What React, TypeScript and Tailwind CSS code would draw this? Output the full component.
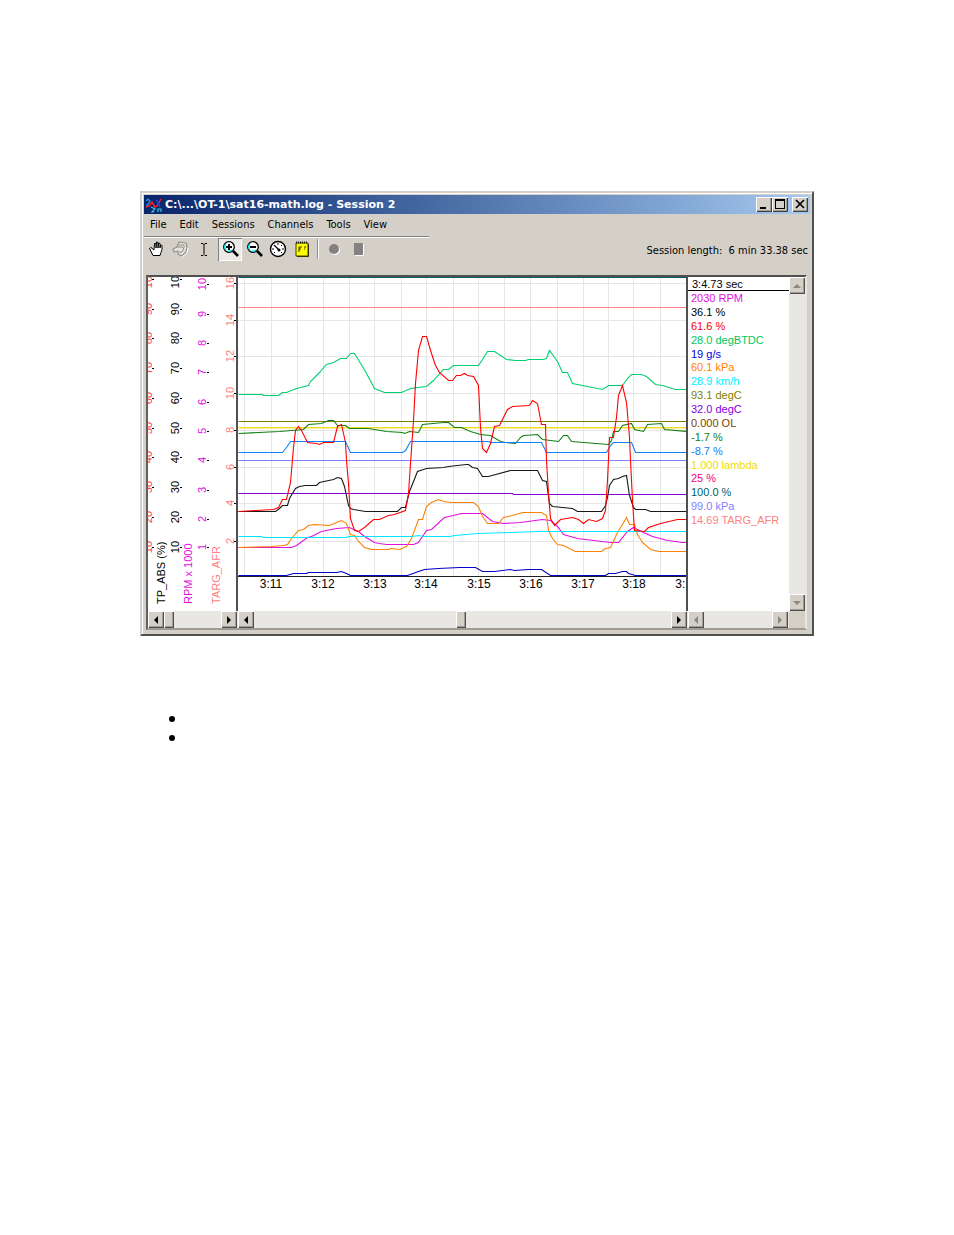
import type { ReactNode } from "react";

const verticals = [244, 271, 297, 323, 349, 374, 401, 426, 453, 478, 504, 530, 557, 583, 608, 633, 660];

const afrScale = [
  { v: "2", y: 541 },
  { v: "4", y: 503 },
  { v: "6", y: 467 },
  { v: "8", y: 430 },
  { v: "10", y: 393 },
  { v: "12", y: 356 },
  { v: "14", y: 320 },
  { v: "16", y: 283 },
];

const percentScale = [
  { v: "10", y: 547 },
  { v: "20", y: 517 },
  { v: "30", y: 487 },
  { v: "40", y: 457 },
  { v: "50", y: 428 },
  { v: "60", y: 398 },
  { v: "70", y: 368 },
  { v: "80", y: 338 },
  { v: "90", y: 309 },
  { v: "100", y: 279 },
];

const rpmScale = [
  { v: "1", y: 547 },
  { v: "2", y: 519 },
  { v: "3", y: 490 },
  { v: "4", y: 460 },
  { v: "5", y: 431 },
  { v: "6", y: 402 },
  { v: "7", y: 372 },
  { v: "8", y: 343 },
  { v: "9", y: 314 },
  { v: "10", y: 284 },
];

const times = [
  { t: "3:11", x: 271 },
  { t: "3:12", x: 323 },
  { t: "3:13", x: 375 },
  { t: "3:14", x: 426 },
  { t: "3:15", x: 479 },
  { t: "3:16", x: 531 },
  { t: "3:17", x: 583 },
  { t: "3:18", x: 634 },
  { t: "3:19", x: 687 },
];

const series = [
  { color: "#005f66", points: "238,277 687,277" },
  { color: "#ff8080", points: "238,307 687,307" },
  { color: "#808000", points: "238,421 687,421" },
  { color: "#f0dc28", points: "238,427 687,427" },
  { color: "#f7ee96", points: "238,428 687,428" },
  { color: "#8080ff", points: "238,460 687,460" },
  { color: "#8000e0", points: "238,493 512,493 513,494 687,494" },
  {
    color: "#00d070",
    points:
      "238,394 262,394 263,395 278,395 282,392 286,392 296,388 308,385 310,381 319,372 326,364 333,362 340,358 346,358 350,353 354,353 365,371 374,388 379,390 384,392 401,392 410,388 426,386 433,380 443,369 448,369 453,365 478,365 482,359 487,351 494,351 506,359 515,360 525,360 528,359 542,359 546,358 549,350 557,361 562,372 567,372 572,383 587,386 602,389 608,385 622,385 627,378 631,374 641,374 646,376 655,384 662,385 675,389 687,389",
  },
  {
    color: "#108010",
    points:
      "238,433 258,432 279,431 303,429 308,424 321,423 328,420 333,420 337,425 345,425 349,428 368,428 386,431 402,432 404,433 409,431 418,432 422,424 443,422 448,422 454,427 461,427 470,431 480,434 490,435 500,441 505,442 515,443 520,437 523,435 537,434 542,439 558,441 563,435 567,435 571,441 608,444 611,440 613,431 618,431 622,425 631,423 634,429 643,431 647,424 661,423 664,429 687,431",
  },
  {
    color: "#1080ff",
    points:
      "238,452 282,452 286,447 290,441 345,441 350,452 402,452 405,450 410,441 488,441 490,442 541,442 546,452 606,452 610,445 613,442 631,442 635,452 687,452",
  },
  {
    color: "#181818",
    points:
      "238,511 275,511 279,508 282,505 287,505 289,498 295,488 299,486 305,485 316,485 319,482 333,479 337,477 341,478 344,486 348,505 350,508 353,509 359,510 365,511 397,511 401,507 405,507 409,491 413,481 417,471 426,468 443,467 448,466 466,464 468,464 472,467 477,468 482,476 488,476 510,470 537,470 542,480 546,481 549,503 552,506 572,508 577,511 601,511 605,505 607,497 609,485 613,479 618,478 622,476 626,475 629,495 633,507 635,509 645,509 650,511 687,511",
  },
  {
    color: "#e010e0",
    points:
      "238,547 258,547 291,547 296,545 307,537 311,536 321,531 336,528 349,527 358,531 364,536 374,542 379,543 386,544 413,544 418,542 426,530 431,529 444,517 453,515 461,513 482,513 492,521 503,523 520,522 542,519 550,520 557,526 563,534 577,538 610,542 618,542 627,531 633,527 643,532 652,536 667,540 682,542 687,542",
  },
  {
    color: "#ff8000",
    points:
      "238,547 271,546 283,545 287,544 291,538 298,530 303,529 308,525 314,524 329,525 336,522 341,520 346,523 350,534 354,535 358,541 364,547 371,549 388,549 391,548 399,549 406,546 411,538 418,519 422,519 426,506 431,502 438,499 443,501 451,502 473,502 478,506 482,516 487,523 498,523 503,517 512,515 522,512 541,512 546,515 548,530 552,538 557,544 563,545 575,551 601,551 605,548 610,547 617,532 622,524 626,517 629,524 634,524 637,534 642,542 650,549 659,551 687,551",
  },
  {
    color: "#00e8ff",
    points:
      "238,536 261,536 263,537 346,537 348,536 411,536 418,535 423,536 449,536 455,535 466,534 477,533 510,532 538,531 687,531",
  },
  {
    color: "#ff0000",
    points:
      "238,511 255,510 273,509 278,507 282,499 286,499 290,482 293,447 295,430 298,426 301,430 307,442 316,443 319,444 323,442 333,442 337,426 341,424 345,442 346,460 348,483 350,518 354,530 358,531 364,527 373,519 379,519 388,515 394,514 405,510 408,493 410,463 413,420 415,383 418,350 422,336 426,336 431,353 435,365 439,372 448,380 452,380 456,375 460,375 464,373 467,375 473,376 478,385 480,427 482,448 486,452 490,443 494,426 499,425 507,409 512,406 529,405 532,400 537,403 541,424 545,424 546,460 548,493 550,518 554,525 560,519 572,517 578,519 583,523 588,519 596,521 602,518 605,510 607,480 609,437 613,437 616,417 618,395 622,385 626,402 629,437 630,460 632,500 634,530 644,531 648,527 660,523 677,519 687,519",
  },
  {
    color: "#0000c8",
    points:
      "238,575 286,575 293,573 306,573 308,572 336,572 341,571 346,573 350,575 407,575 418,571 424,569 438,568 459,567 475,567 482,571 494,571 510,569 514,570 528,569 541,569 550,575 605,575 608,573 615,573 622,571 626,571 628,573 635,575 687,575",
  },
];

const readings = [
  { text: "2030 RPM", color: "text-[#e010e0]" },
  { text: "36.1 %", color: "text-black" },
  { text: "61.6 %", color: "text-[#ff0000]" },
  { text: "28.0 degBTDC", color: "text-[#00c860]" },
  { text: "19 g/s", color: "text-[#0000e0]" },
  { text: "60.1 kPa", color: "text-[#ff8000]" },
  { text: "28.9 km/h", color: "text-[#00f0ff]" },
  { text: "93.1 degC", color: "text-[#808000]" },
  { text: "32.0 degC", color: "text-[#8000e0]" },
  { text: "0.000 OL", color: "text-[#804000]" },
  { text: "-1.7 %", color: "text-[#108010]" },
  { text: "-8.7 %", color: "text-[#1080ff]" },
  { text: "1.000 lambda", color: "text-[#f0dc00]" },
  { text: "25 %", color: "text-[#f00080]" },
  { text: "100.0 %", color: "text-[#005f66]" },
  { text: "99.0 kPa", color: "text-[#8080ff]" },
  { text: "14.69 TARG_AFR", color: "text-[#ff8080]" },
];

export default function App() {
  return (
    <div className="min-h-screen bg-white pt-[191px] font-['Liberation_Sans',sans-serif] text-[11px] text-black">
      <main className="mx-[140px] border-2 border-t-[#d4d0c8] border-r-[#505050] border-b-[#505050] border-l-[#d4d0c8] bg-[#d4d0c8] p-[2px] shadow-[inset_1px_1px_0_#fff]">
        <TitleBar />
        <MenuBar />
        <ToolBar />
        <section className="mt-[14px] mr-[3px] mb-[2px] ml-[2px] grid grid-cols-[90px_minmax(0,1fr)_101px_16px] grid-rows-[334px_17px] border-2 border-t-[#505050] border-r-[#e8e6e2] border-b-[#a09c94] border-l-[#606060]">
          <div className="border-r-2 border-[#505050] bg-white">
            <Scales />
          </div>
          <div className="border-r-2 border-[#505050] bg-white">
            <Chart />
          </div>
          <Readings />
          <div className="flex flex-col justify-between bg-[#e9e7e3]">
            <ArrowButton label="Scroll up" dir="up" disabled />
            <ArrowButton label="Scroll down" dir="down" disabled />
          </div>

          <HScroll>
            <ArrowButton label="Scroll scales left" dir="left" />
            <Thumb label="Scales position" />
            <span className="flex-1" />
            <ArrowButton label="Scroll scales right" dir="right" />
          </HScroll>
          <HScroll>
            <ArrowButton label="Scroll chart left" dir="left" />
            <span className="grow-[201]" />
            <Thumb label="Chart position" />
            <span className="grow-[205]" />
            <ArrowButton label="Scroll chart right" dir="right" />
          </HScroll>
          <HScroll>
            <ArrowButton label="Scroll readings left" dir="left" disabled />
            <span className="flex-1" />
            <ArrowButton label="Scroll readings right" dir="right" disabled />
          </HScroll>
          <div />
        </section>
      </main>

      <ul className="mt-[73px] pl-[169px]">
        <li className="flex h-[19px] items-center">
          <span className="size-[6px] rounded-full bg-black" />
        </li>
        <li className="flex h-[19px] items-center">
          <span className="size-[6px] rounded-full bg-black" />
        </li>
      </ul>
    </div>
  );
}

function TitleBar() {
  return (
    <header className="flex h-[19px] items-center bg-linear-to-r from-[#0a246a] to-[#a6caf0] pr-[2px] pl-[2px]">
      <svg viewBox="0 0 17 16" className="h-4 w-[17px]" fill="none">
        <path d="M0 4l2-2 2 2-2 3-2 2" stroke="#20a0f0" strokeWidth="1.2" />
        <path d="M0 10l3-1 3-4 3 5 2-1 4-7" stroke="#ff2020" strokeWidth="1.5" />
        <path d="M5 10l4 2-3 3h2M12 15v-3h3v3" stroke="#30c8f0" strokeWidth="1.2" />
        <path d="M10 3l2 2 2 5" stroke="#2050e0" strokeWidth="1.3" />
      </svg>
      <h1 className="ml-[2px] flex-1 truncate pt-px font-['DejaVu_Sans',sans-serif] text-[11px] font-bold text-white">
        C:\...\OT-1\sat16-math.log - Session 2
      </h1>
      <CaptionButton label="Minimize">
        <path d="M4 10h6v2H4z" fill="#000" />
      </CaptionButton>
      <CaptionButton label="Maximize">
        <path d="M3 2h10v10H3zM4 4v7h8V4z" fill="#000" fillRule="evenodd" />
      </CaptionButton>
      <span className="w-1" />
      <CaptionButton label="Close">
        <path d="M4 3l8 8M12 3l-8 8" stroke="#000" strokeWidth="1.7" />
      </CaptionButton>
    </header>
  );
}

function CaptionButton({ label, children }: { label: string; children: ReactNode }) {
  return (
    <button
      aria-label={label}
      className="h-[15px] w-4 bg-[#d4d0c8] shadow-[inset_1px_1px_0_#fff,inset_-1px_-1px_0_#404040,inset_-2px_-2px_0_#a09c94]"
    >
      <svg viewBox="0 0 16 15" className="h-[15px] w-4">
        {children}
      </svg>
    </button>
  );
}

function MenuBar() {
  return (
    <nav className="w-[285px] border-b border-[#808080] shadow-[0_1px_0_#fff]">
      <ul className="flex h-[22px] items-center gap-[13px] pt-px pl-[6px] font-['DejaVu_Sans_Condensed','DejaVu_Sans',sans-serif] text-[11px]">
        {["File", "Edit", "Sessions", "Channels", "Tools", "View"].map((m) => (
          <li key={m}>
            <button>{m}</button>
          </li>
        ))}
      </ul>
    </nav>
  );
}

function ToolBar() {
  return (
    <div className="flex items-center justify-between pr-[2px]">
      <div className="flex h-6 items-center">
        <ToolButton label="Pan">
          <path
            d="M6 15.500h7l1-3 1-3V5.500L13.500 5 13 8V3.500L11.500 3 11 8V2.500L9.500 2 9 8V3.500L7.500 3.500 7 10 4 7.500 2.500 8.500z"
            fill="#fff"
            stroke="#000"
            strokeLinejoin="round"
          />
        </ToolButton>
        <ToolButton label="Pan all" disabled>
          <path
            d="M6 7l2-5 7 1 1 4-1 5-4 4-4-2v-3l-4 1-1-3z"
            fill="#e4e2dc"
            stroke="#929088"
            strokeWidth="1.200"
            strokeLinejoin="round"
          />
          <path d="M6 7h5l2 2-2 3H8M8 5h5v3" fill="none" stroke="#929088" />
          <path d="M11 17l5-4 1-5" fill="none" stroke="#fff" />
        </ToolButton>
        <ToolButton label="Select">
          <path d="M6 3.500h2l1 1 1-1h2M9 4v10M6 15.500h2l1-1 1 1h2" fill="none" stroke="#000" />
        </ToolButton>
        <span className="w-[2px]" />
        <ToolButton label="Zoom in" pressed>
          <Lens />
          <path d="M5 7h6M8 4v6" stroke="#000" strokeWidth="2" />
        </ToolButton>
        <ToolButton label="Zoom out">
          <Lens />
          <path d="M5 7h6" stroke="#000" strokeWidth="2" />
        </ToolButton>
        <ToolButton label="Gauge">
          <circle cx="9" cy="9" r="7.500" fill="#fff" stroke="#000" strokeWidth="1.400" />
          <path d="M5 5l5 5" stroke="#000" strokeWidth="1.300" />
          <path d="M9 3v2M13 5l-1 1M15 9h-2M3 9h2M5 13l1-1M13 13l-1-1" stroke="#000" />
          <circle cx="10" cy="10" r="1.500" fill="#000" />
        </ToolButton>
        <ToolButton label="Notes">
          <path d="M3 3h12v13H3z" fill="#ffff00" stroke="#404000" />
          <path d="M3 2.500h12" stroke="#202020" strokeWidth="2" strokeDasharray="1 1" />
          <path d="M6 7h3M6 7v5M6 9h2M11 7h2M11 9h1M15.500 4v12.500H4" fill="none" stroke="#303000" />
        </ToolButton>
        <span className="mx-[3px] h-5 w-[2px] border-r border-l border-r-white border-l-[#909090]" />
        <ToolButton label="Record" disabled>
          <circle cx="10" cy="10" r="5" fill="#fff" />
          <circle cx="9" cy="9" r="5" fill="#848280" />
        </ToolButton>
        <ToolButton label="Stop" disabled>
          <path d="M6 4h9v12H6z" fill="#fff" />
          <path d="M5 3h9v12H5z" fill="#848280" />
        </ToolButton>
      </div>
      <p className="pt-1 font-['DejaVu_Sans_Condensed','DejaVu_Sans',sans-serif] text-[11px] whitespace-pre">
        Session length:{"  "}6 min 33.38 sec
      </p>
    </div>
  );
}

function ToolButton({
  label,
  pressed,
  disabled,
  children,
}: {
  label: string;
  pressed?: boolean;
  disabled?: boolean;
  children: ReactNode;
}) {
  return (
    <button
      aria-label={label}
      disabled={disabled}
      className={
        pressed
          ? "flex h-[23px] w-6 items-center justify-center bg-[#ebe9e5] shadow-[inset_1px_1px_0_#808080,inset_-1px_-1px_0_#fff]"
          : "flex h-[23px] w-6 items-center justify-center"
      }
    >
      <svg viewBox="0 0 18 18" className="size-[18px]">
        {children}
      </svg>
    </button>
  );
}

function Lens() {
  return (
    <>
      <circle cx="8" cy="7" r="5.300" fill="#fff" stroke="#000" strokeWidth="1.300" />
      <path d="M5 10a4.200 4.200 0 0 1 0-6M11 10a4.200 4.200 0 0 1-4 1" fill="none" stroke="#00e0e8" strokeWidth="1.500" />
      <path d="M12 11l5 5" stroke="#000" strokeWidth="2.600" />
    </>
  );
}

type Tick = { v: string; y: number };

function Scale({ ticks, x, color, tickX }: { ticks: Tick[]; x: number; color: string; tickX: number }) {
  return (
    <>
      {ticks.map((t) => (
        <g key={t.v}>
          <text transform={`translate(${x} ${t.y}) rotate(-90)`} textAnchor="middle" fill={color}>
            {t.v}
          </text>
          <path d={`M${tickX} ${t.y + 0.5}h2`} stroke="#000" />
        </g>
      ))}
    </>
  );
}

function Scales() {
  return (
    <svg viewBox="148 277 88 334" className="h-[334px] w-[88px] text-[11px]">
      <Scale ticks={percentScale} x={152} tickX={152} color="#ff4040" />
      <Scale ticks={percentScale} x={179} tickX={180} color="#000" />
      <Scale ticks={rpmScale} x={206} tickX={207} color="#e010e0" />
      <Scale ticks={afrScale} x={234} tickX={234} color="#ff8080" />
      <text transform="translate(165 604) rotate(-90)">TP_ABS (%)</text>
      <text transform="translate(192 604) rotate(-90)" fill="#e010e0">
        RPM x 1000
      </text>
      <text transform="translate(220 604) rotate(-90)" fill="#ff8080">
        TARG_AFR
      </text>
    </svg>
  );
}

function Chart() {
  return (
    <svg viewBox="238 277 448 334" preserveAspectRatio="xMinYMin slice" className="h-[334px] w-full">
      <g stroke="#e6e6e6">
        {verticals.map((x) => (
          <path key={x} d={`M${x + 0.5} 277v299`} />
        ))}
        {afrScale.map((t) => (
          <path key={t.v} d={`M238 ${t.y + 0.5}h449`} />
        ))}
      </g>
      <path d="M238 576.500h449" stroke="#202020" />
      <g transform="translate(.5 .5)" fill="none" strokeWidth="1.100">
        {series.map((s) => (
          <polyline key={s.color} points={s.points} stroke={s.color} />
        ))}
      </g>
      <g textAnchor="middle" className="text-[12px]">
        {times.map((t) => (
          <text key={t.t} x={t.x} y="588">
            {t.t}
          </text>
        ))}
      </g>
    </svg>
  );
}

function Readings() {
  return (
    <div className="bg-white">
      <p className="h-[14px] border-b border-black pl-[4px] leading-[14px]">3:4.73 sec</p>
      <ul className="grid h-[236px] auto-rows-fr pl-[3px] leading-[14px]">
        {readings.map((r) => (
          <li key={r.text} className={r.color}>
            {r.text}
          </li>
        ))}
      </ul>
    </div>
  );
}

function HScroll({ children }: { children: ReactNode }) {
  return <div className="flex items-stretch bg-[#e9e7e3] pr-px">{children}</div>;
}

function Thumb({ label }: { label: string }) {
  return (
    <button
      aria-label={label}
      className="w-[10px] bg-[#d4d0c8] shadow-[inset_1px_1px_0_#fff,inset_-1px_-1px_0_#505050,inset_-2px_-2px_0_#a09c94]"
    />
  );
}

const arrows = {
  up: "M4 10h8L8 6z",
  down: "M4 6h8l-4 4z",
  left: "M10 4v8L6 8z",
  right: "M6 4v8l4-4z",
};

function ArrowButton({ label, dir, disabled }: { label: string; dir: keyof typeof arrows; disabled?: boolean }) {
  return (
    <button
      aria-label={label}
      disabled={disabled}
      className="flex h-[17px] w-4 items-center justify-center bg-[#d4d0c8] shadow-[inset_1px_1px_0_#fff,inset_-1px_-1px_0_#505050,inset_-2px_-2px_0_#a09c94]"
    >
      <svg viewBox="0 0 16 16" className="size-4">
        <path d={arrows[dir]} fill={disabled ? "#8a8884" : "#000"} />
      </svg>
    </button>
  );
}
